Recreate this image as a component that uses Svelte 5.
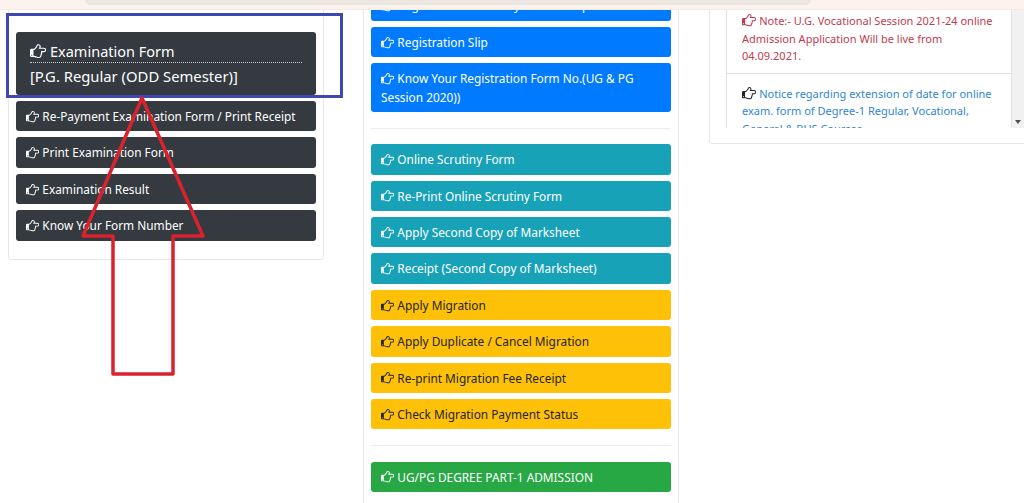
<script>
  const leftLinks = [
    'Re-Payment Examination Form / Print Receipt',
    'Print Examination Form',
    'Examination Result',
    'Know Your Form Number'
  ]

  const middleGroups = [
    [
      { label: 'Registration Form Payment Receipt', tone: 'blue' },
      { label: 'Registration Slip', tone: 'blue' },
      { label: 'Know Your Registration Form No.(UG & PG Session 2020))', tone: 'blue' }
    ],
    [
      { label: 'Online Scrutiny Form', tone: 'teal' },
      { label: 'Re-Print Online Scrutiny Form', tone: 'teal' },
      { label: 'Apply Second Copy of Marksheet', tone: 'teal' },
      { label: 'Receipt (Second Copy of Marksheet)', tone: 'teal' },
      { label: 'Apply Migration', tone: 'yellow' },
      { label: 'Apply Duplicate / Cancel Migration', tone: 'yellow' },
      { label: 'Re-print Migration Fee Receipt', tone: 'yellow' },
      { label: 'Check Migration Payment Status', tone: 'yellow' }
    ],
    [{ label: 'UG/PG DEGREE PART-1 ADMISSION', tone: 'green' }]
  ]
</script>

{#snippet hand()}
  <svg class="hand" viewBox="0 0 1792 1792" aria-hidden="true">
    <path fill="currentColor" d="M256 1344q0-26-19-45t-45-19-45 19-19 45 19 45 45 19 45-19 19-45zm1408-576q0-51-39-89.5t-89-38.5h-576q0-20 15-48.5t33-55 33-68 15-84.5q0-67-44.5-97.5t-115.5-30.5q-24 0-90 139-24 44-37 65-40 64-112 145-71 81-101 106-69 57-140 57h-32v640h32q72 0 167 32t193.5 64 179.5 32q189 0 189-167 0-26-5-56 30-16 47.5-52.5t17.5-73.5-18-69q53-50 53-119 0-25-10-55.5t-25-47.5h331q52 0 90-38t38-90zm128-1q0 105-75.5 181t-180.5 76h-169q-4 62-37 119 3 21 3 43 0 101-60 178 1 139-85 219.5t-227 80.5q-133 0-322-69-164-59-223-59h-288q-53 0-90.5-37.5t-37.5-90.5v-640q0-53 37.5-90.5t90.5-37.5h288q10 0 21.5-4.5t23.5-14 22.5-18 24-22.5 20.5-21.5 19-21.5 14-17q65-74 100-129 13-21 33-62t37-72 40.5-63 55-49.5 69.5-17.5q125 0 206.5 67t81.5 189q0 68-22 128h374q104 0 180 76t76 179z"/>
  </svg>
{/snippet}

<div class="page">
  <div class="browser-bar"><div class="address"></div></div>

  <div class="scroller">
    <div class="columns">
      <section class="card left">
        <a class="btn dark big" href="#exam">
          <span class="big-title">{@render hand()} Examination Form</span>
          <span class="big-sub">[P.G. Regular (ODD Semester)]</span>
        </a>
        {#each leftLinks as label}
          <a class="btn dark" href="#exam">{@render hand()} {label}</a>
        {/each}
      </section>

      <section class="card middle">
        {#each middleGroups as group, i}
          {#if i > 0}<hr />{/if}
          {#each group as item}
            <a class="btn {item.tone}" href="#link">{@render hand()} {item.label}</a>
          {/each}
        {/each}
      </section>

      <section class="card right">
        <div class="news">
          <ul>
            <li class="note">{@render hand()} Note:- U.G. Vocational Session 2021-24 online Admission Application Will be live from 04.09.2021.</li>
            <li class="info">
              <span class="ink">{@render hand()}</span> Notice regarding extension of date for online exam. form of Degree-1 Regular, Vocational, General &amp; BUS Courses
            </li>
          </ul>
          <div class="track"><span class="arrow"></span></div>
        </div>
      </section>
    </div>
  </div>

  <div class="mark-box"></div>
  <svg class="mark-arrow" width="1024" height="503" viewBox="0 0 1024 503" aria-hidden="true">
    <path d="M142 98 L203 236 H173 V374 H113 V236 H83 Z" />
  </svg>
</div>

<style>
  :global(body) {
    margin: 0;
    background: #fff;
    overflow: hidden;
  }

  .page {
    position: relative;
    width: 1024px;
    height: 503px;
    overflow: hidden;
    font-family: "Noto Sans", "Open Sans", sans-serif;
    font-size: 11.85px;
    line-height: 18.4px;
  }

  .browser-bar {
    height: 10px;
    background: #fcf3ee;
    border-bottom: 1px solid #f1e9e4;
    box-sizing: border-box;
  }

  .address {
    width: 726px;
    height: 5px;
    margin-left: 85px;
    background: #ece6e1;
    border-radius: 0 0 8px 8px;
  }

  .scroller {
    height: 493px;
    overflow: hidden;
  }

  .columns {
    display: grid;
    grid-template-columns: 355px 346px 1fr;
    align-items: start;
    margin-top: -30px;
    padding-left: 8px;
  }

  .card {
    box-sizing: border-box;
    display: flex;
    flex-direction: column;
    gap: 6px;
    background: #fff;
    border: 1px solid #e8e8e8;
    border-radius: 3px;
  }

  .left {
    width: 316px;
    padding: 51px 7px 18px;
  }

  .middle {
    width: 316px;
    padding: 9.4px 7px 40px;
  }

  .right {
    width: 420px;
    padding: 20px 0 15px 16px;
  }

  .btn {
    display: block;
    padding: 6px 10px;
    border-radius: 3px;
    color: #fff;
    text-decoration: none;
  }

  .hand {
    display: inline-block;
    width: 1.12em;
    height: 1.12em;
    vertical-align: -0.17em;
  }

  .dark { background: #343a40; }
  .blue { background: #007bff; }
  .teal { background: #17a2b8; }
  .yellow { background: #ffc107; color: #212529; }
  .green { background: #28a745; }

  .big {
    display: flex;
    flex-direction: column;
    padding: 9px 14px 9px;
    font-size: 14.5px;
    line-height: 20px;
  }

  .big-title {
    padding-bottom: 1px;
    border-bottom: 1px dotted #c8cacc;
  }

  .big-sub {
    margin-top: 3px;
    font-size: 14.8px;
  }

  hr {
    width: 100%;
    margin: 9.6px 0;
    border: 0;
    border-top: 1px solid #ececec;
  }

  .news {
    display: flex;
    width: 298px;
    height: 127px;
    overflow: hidden;
  }

  ul {
    flex: 1;
    min-width: 0;
    margin: 0;
    padding: 0;
    list-style: none;
    font-size: 11px;
    line-height: 17.5px;
  }

  ul .hand {
    width: 1.3em;
    height: 1.3em;
    vertical-align: -0.25em;
  }

  li {
    padding: 11px 14px 8px 15px;
    border: 1px solid #e2e2e2;
    border-top-width: 0;
  }

  .note { color: #c23a50; }
  .info { color: #2f86cf; }
  .ink { color: #212529; }

  .track {
    position: relative;
    flex: none;
    width: 12px;
    background: #f1f1f1;
  }

  .arrow {
    position: absolute;
    left: 3px;
    bottom: 4px;
    border: 3px solid transparent;
    border-top: 4px solid #505050;
    border-bottom: 0;
  }

  .mark-box {
    position: absolute;
    left: 6px;
    top: 13px;
    width: 331px;
    height: 79px;
    border: 3.5px solid #3f48b0;
  }

  .mark-arrow {
    position: absolute;
    inset: 0;
    pointer-events: none;
  }

  .mark-arrow path {
    fill: none;
    stroke: #d8232f;
    stroke-width: 3.5;
    stroke-linejoin: round;
  }
</style>
